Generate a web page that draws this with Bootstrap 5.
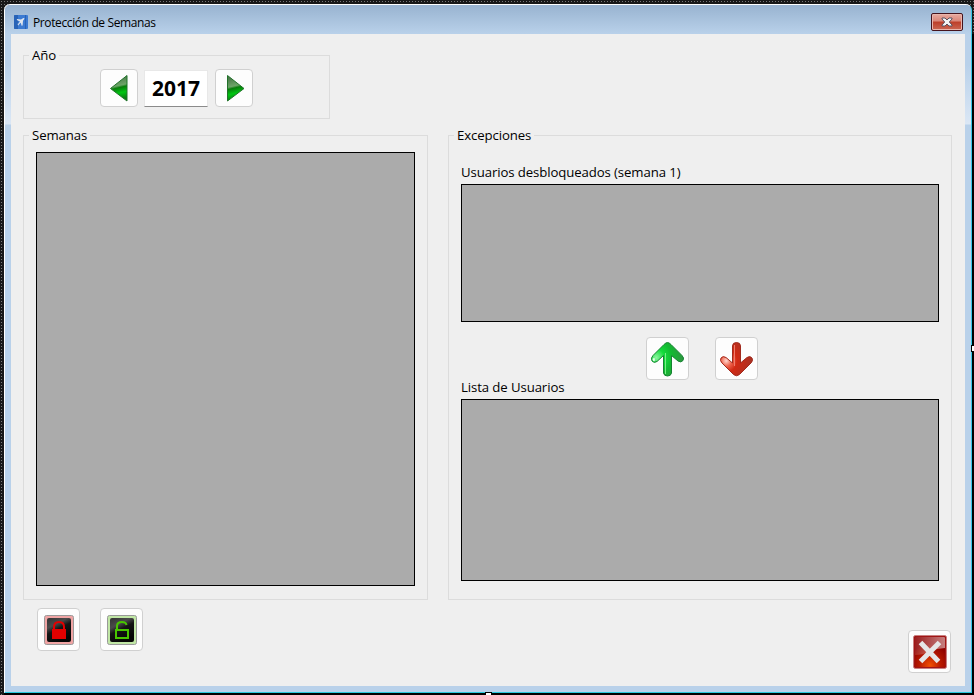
<!DOCTYPE html>
<html lang="es">
<head>
<meta charset="utf-8">
<title>Protección de Semanas</title>
<link href="https://cdn.jsdelivr.net/npm/bootstrap@5.3.0/dist/css/bootstrap.min.css" rel="stylesheet">
<style>
body{width:974px;height:695px;overflow:hidden;background:#050505;font-family:"Open Sans","Noto Sans",sans-serif;font-size:13px;line-height:18px;color:#000;padding:4px 2px 2px 4px;
 background-image:radial-gradient(circle,#777 0 .6px,transparent .7px),linear-gradient(#181818,#181818);background-size:3px 3px,auto}
.edge-right{right:0;top:34px;width:2px;bottom:0;background:#000}
.edge-bottom{left:4px;right:0;bottom:0;height:2px;background:#000}
.win{width:968px;height:689px;border:1px solid #fff;border-right-color:#35c5e8;border-bottom:1px solid #27c8dc;border-radius:6px 6px 0 0;
 background:linear-gradient(#99b4d1 0,#a3bedb 15px,#b9d1ea 29px,#b9d1ea 60px,#dbe7f5 119px,#b9d1ea 120px)}
.titlebar{height:29px;padding:0 8px 0 9px;background:linear-gradient(#98b3d0,#b9d1ea);border-radius:5px 5px 0 0}
.app-icon{margin-top:10px}
.title{font-size:12px;letter-spacing:-.38px;margin:9px 0 0 5px}
.winclose{width:32px;height:18px;margin-top:8px;border:1px solid #45131c;border-radius:2px;background:linear-gradient(#e8aba1 0,#d98476 46%,#bc3c27 48%,#cb6753 100%);box-shadow:inset 0 0 0 1px #e9b5ac}
.client{margin:0 6px;height:652px;background:#efefef;padding:21px 12px 0}
.group{border:1px solid #dcdcdc;position:relative}
.cap{position:absolute;left:5px;top:-10px;background:#efefef;padding:0 3px;white-space:nowrap}
.txt{font-size:13.200px;letter-spacing:-.1px;white-space:nowrap}
.year{width:307px;height:64px;padding:13px 0 0 76px}
.panels{margin:16px 1px 0 0}
.weeks{width:405px;height:465px;padding:16px 12px 13px}
.exc{width:504px;height:465px;padding:27px 12px 0}
.gridbox{background:#ababab;border:1px solid #000}
.tool{width:43px;height:43px;padding:0;background:#fdfdfd;border:1px solid #d0d0d0;border-radius:4px}
.tool svg,.winclose svg{display:block}
.small-tool{width:38px;height:38px}
.num{width:64px;height:37px;margin:1px 7px 0 6px;background:#fff;border:1px solid #e8e8e8;border-bottom-color:#8b8b8b;font-size:21px;font-weight:700;line-height:35px}
.lab{height:21px}
.unlocked{height:138px}
.moves{margin:15px 0 0 185px;gap:26px;height:41px}
.users{height:182px}
.actions{margin:8px 2px 0 14px;gap:20px}
.exit{margin-top:22px}
.grip{background:#fff;border:1px solid #000;position:absolute;width:7px;height:7px}
.grip-b{left:485px;top:692px}
.grip-r{left:971px;top:345px}
</style>
<script src="https://cdn.jsdelivr.net/npm/bootstrap@5.3.0/dist/js/bootstrap.bundle.min.js"></script>
</head>
<body class="position-relative">
<div class="edge-right position-absolute"></div><div class="edge-bottom position-absolute"></div>
<main class="win position-relative">
 <header class="titlebar d-flex align-items-start">
  <svg class="app-icon" width="14" height="14" viewBox="0 0 14 14"><rect width="14" height="14" rx="1" fill="#3b7ad2"/><path d="M0 1Q0 0 1 0H4V14H1Q0 14 0 13zM11 0h1v14h-1z" fill="#2863b7"/><path d="M3 4l4 .6L9.400 3l1.200.5L9 5.800l-.4 4.600-1 .4-.8-3-1.700 1.500-.2 1.400-.8-1.200L3 9l1.300-.2L6 6.600 2.800 5z" fill="#e0e6ee"/></svg>
  <span class="title">Protección de Semanas</span>
  <button class="winclose btn p-0 ms-auto d-flex align-items-center justify-content-center" aria-label="Cerrar">
   <svg width="12" height="10" viewBox="0 0 12 10"><path d="M1 1h3l2 2 2-2h3v1L8.300 5 11 8v1H8L6 7 4 9H1V8l2.700-3L1 2z" fill="#f4f4f4" stroke="#5b5260"/></svg>
  </button>
 </header>
 <section class="client">
  <div class="group year d-flex align-items-start">
   <span class="cap txt">Año</span>
   <button class="btn tool small-tool" aria-label="Año anterior"><svg width="36" height="36" viewBox="0 0 36 36"><defs><linearGradient id="tg" x1="0" y1="0" x2=".15" y2="1"><stop offset="0" stop-color="#3f6b3e"/><stop offset=".46" stop-color="#6da468"/><stop offset=".54" stop-color="#087d0b"/><stop offset=".75" stop-color="#00c512"/><stop offset="1" stop-color="#087b10"/></linearGradient></defs><path d="M26 5.500V31L9.500 18.500z" fill="url(#tg)" stroke="#21722a"/></svg></button>
   <div class="num text-center">2017</div>
   <button class="btn tool small-tool" aria-label="Año siguiente"><svg width="36" height="36" viewBox="0 0 36 36"><path d="M11.500 5.500V31L28 18.500z" fill="url(#tg)" stroke="#21722a"/></svg></button>
  </div>
  <div class="panels d-flex justify-content-between">
   <div class="group weeks"><span class="cap txt">Semanas</span><div class="gridbox h-100"></div></div>
   <div class="group exc">
    <span class="cap txt">Excepciones</span>
    <div class="txt lab">Usuarios desbloqueados (semana 1)</div>
    <div class="gridbox unlocked"></div>
    <div class="moves d-flex">
     <button class="btn tool" aria-label="Subir"><svg width="41" height="41" viewBox="0 0 41 41"><defs><radialGradient id="ga" cx=".15" cy=".45" r=".85"><stop offset="0" stop-color="#8df5a0"/><stop offset=".3" stop-color="#12dc3a"/><stop offset=".58" stop-color="#12b931"/><stop offset="1" stop-color="#2f9440"/></radialGradient></defs><path d="M20.500 4.500Q22 4.500 24 6.500L35 17.500Q37.500 20 36 22.500 34 25 31 23L24.500 17.500V35Q24 38 20.500 38 17 38 16.500 35V17.500L10 23.500Q7 25.500 5 23 3.500 20 6 17.500L17 6.500Q19 4.500 20.500 4.500z" fill="url(#ga)" stroke="#168332"/><path d="M18.500 15v21" fill="none" stroke="#77ee86"/><path d="M5.500 21.500q.5-2 2-1.500l.5 2.500-1.500.8z" fill="#e5ffe8"/></svg></button>
     <button class="btn tool" aria-label="Bajar"><svg width="41" height="41" viewBox="0 0 41 41"><defs><radialGradient id="ra" cx=".18" cy=".55" r=".8"><stop offset="0" stop-color="#ffd8d0"/><stop offset=".2" stop-color="#ef6650"/><stop offset=".42" stop-color="#d22a14"/><stop offset="1" stop-color="#a93224"/></radialGradient></defs><path d="M20.500 4.500Q24.500 4.500 24.500 8V25L31 19.500Q34 17.500 36 20 37.500 22.500 35 25L23.500 36.500Q20.500 39 17.500 36.500L6 25Q3.500 22.500 5 20 7 17.500 10 19.500L16.500 25V8Q16.500 4.500 20.500 4.500z" fill="url(#ra)" stroke="#a12a1d"/><path d="M18.500 7v21" stroke="#f17c6c"/></svg></button>
    </div>
    <div class="txt lab">Lista de Usuarios</div>
    <div class="gridbox users"></div>
   </div>
  </div>
  <footer class="actions d-flex align-items-start">
   <button class="btn tool" aria-label="Bloquear"><svg width="41" height="41" viewBox="0 0 41 41"><defs><linearGradient id="bk" x1="0" y1="0" x2=".5" y2="1"><stop offset="0" stop-color="#333"/><stop offset=".35" stop-color="#4a4a4a"/><stop offset=".55" stop-color="#151515"/><stop offset="1" stop-color="#050505"/></linearGradient></defs><rect x="6.500" y="6.500" width="29" height="29" rx="2" fill="#f0a4a4" stroke="#999"/><rect x="9" y="9" width="24" height="24" rx="2" fill="url(#bk)"/><path d="M16 21v-3q0-5 5-5t5 5v3" fill="none" stroke="#e30000" stroke-width="2"/><path d="M14 20h14v10H14z" fill="#e30000"/></svg></button>
   <button class="btn tool" aria-label="Desbloquear"><svg width="41" height="41" viewBox="0 0 41 41"><rect x="6.500" y="6.500" width="29" height="29" rx="2" fill="#c0e6a5" stroke="#999"/><rect x="9" y="9" width="24" height="24" rx="2" fill="url(#bk)"/><path d="M16 20.500V17q0-4 5-4 4 0 4.500 3M15 21h12v8H15z" fill="none" stroke="#48c500" stroke-width="2"/></svg></button>
   <button class="btn tool ms-auto exit" aria-label="Salir"><svg width="41" height="41" viewBox="0 0 41 41"><defs><radialGradient id="rx" cx=".5" cy=".9" r=".65"><stop offset="0" stop-color="#f25000"/><stop offset=".5" stop-color="#b81a00"/><stop offset="1" stop-color="#8d0000"/></radialGradient><linearGradient id="gl" x1="0" y1="0" x2="1" y2="0"><stop offset="0" stop-color="#fff" stop-opacity=".12"/><stop offset="1" stop-color="#fff" stop-opacity=".5"/></linearGradient></defs><rect x="4.500" y="4.500" width="33" height="33" rx="2" fill="url(#rx)" stroke="#c98080"/><path d="M6 6H36V17Q23 18 19 21 14 24 6 24z" fill="url(#gl)"/><rect x="5.500" y="5.500" width="31" height="31" rx="1.500" fill="none" stroke="#a01515"/><path d="M11.500 11.500L29.500 30.500M30.500 11.500L11.500 30.500" stroke="#e6e6e6" stroke-width="5"/></svg></button>
  </footer>
 </section>
</main>
<i class="grip grip-b"></i><i class="grip grip-r"></i>
</body>
</html>
